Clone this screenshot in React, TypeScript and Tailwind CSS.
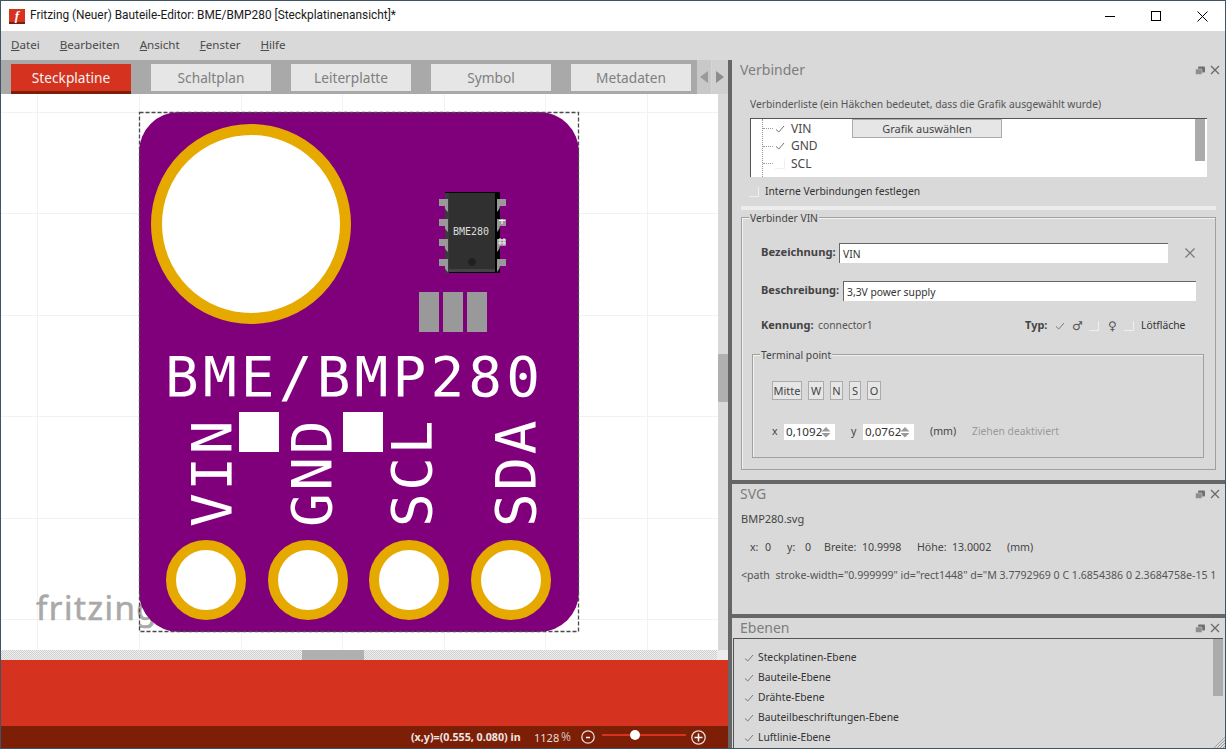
import React from "react";

const F = "font-['Noto_Sans',sans-serif]";
const BOX = "w-[10px] h-[10px] border-r border-b border-[#efefef] shrink-0";

function Check({ color = "#7a7a7a" }: { color?: string }) {
  return (
    <svg width="10" height="10" viewBox="0 0 10 10" className="shrink-0">
      <path d="M1 5.5 L3.8 8 L9 2" fill="none" stroke={color} strokeWidth="1" />
    </svg>
  );
}

function PanelIcons() {
  return (
    <div className="flex items-center gap-[5px]">
      <svg width="10" height="9" viewBox="0 0 10 9">
        <rect x="3" y="0.5" width="7" height="6" rx="1" fill="#6f6f6f" />
        <rect x="0.5" y="3" width="6.5" height="5.5" rx="1" fill="#8f8f8f" stroke="#d9d9d9" strokeWidth="0.5" />
      </svg>
      <svg width="10" height="10" viewBox="0 0 10 10">
        <path d="M1 1 L9 9 M9 1 L1 9" stroke="#6a6a6a" strokeWidth="1.3" />
      </svg>
    </div>
  );
}

function PanelTitle({ children, className = "" }: { children: React.ReactNode; className?: string }) {
  return (
    <div className={`flex items-center justify-between pl-[8px] pr-[5px] ${className}`}>
      <span className="text-[14px] leading-[20px] text-[#7d7d7d]">{children}</span>
      <PanelIcons />
    </div>
  );
}

function Tab({ label, active }: { label: string; active?: boolean }) {
  return active ? (
    <div className="w-[120px] h-[30px] bg-[#d5321f] border-b-[3px] border-[#7d1e07] text-[#f2f2f2] text-[13.7px] leading-[27px] text-center">
      {label}
    </div>
  ) : (
    <div className="w-[120px] h-[27px] bg-[#e6e6e6] text-[#7f7f7f] text-[13.7px] leading-[27px] text-center">{label}</div>
  );
}

function Spin({ value }: { value: string }) {
  return (
    <div className="w-[51px] h-[16px] bg-white flex items-center pl-[2px] text-[11.6px] text-[#333] leading-none">
      <span className="w-[35px]">{value}</span>
      <svg width="10" height="12" viewBox="0 0 10 12">
        <path d="M5 1 L9.5 5.5 H0.5 Z M0.5 7 H9.5 L5 11.5 Z" fill="#9a9a9a" />
      </svg>
    </div>
  );
}

function SmallBtn({ label, w }: { label: string; w: string }) {
  return (
    <div className={`${w} h-[19px] bg-[#e6e6e6] border border-[#ababab] text-[11px] leading-[17px] text-center text-[#444]`}>
      {label}
    </div>
  );
}

function Board() {
  const gridX = [37, 139, 241, 342, 444, 545, 647];
  const gridY = [11, 112, 213, 315, 416, 518, 619];
  const pads = [206, 308, 409, 511];
  const pinsY = [199, 219, 239, 259];
  const labels: [string, number][] = [
    ["VIN", 231],
    ["GND", 331],
    ["SCL", 431],
    ["SDA", 535],
  ];
  return (
    <svg width="717" height="556" viewBox="1 94 717 556" className="block">
      <rect x="1" y="94" width="717" height="556" fill="#ffffff" />
      {gridX.map((x) => (
        <line key={x} x1={x + 0.5} x2={x + 0.5} y1="94" y2="650" stroke="#f1f2f3" />
      ))}
      {gridY.map((y) => (
        <line key={y} y1={y + 0.5} y2={y + 0.5} x1="0" x2="718" stroke="#f1f2f3" />
      ))}
      <text
        x="36"
        y="620"
        fontFamily="'Noto Sans', sans-serif"
        fontSize="33"
        fill="#a9a9a9"
        stroke="#a9a9a9"
        strokeWidth="0.6"
        letterSpacing="1.5"
      >
        fritzing
      </text>
      <rect x="139" y="112" width="440" height="520" rx="40" fill="#80007c" />
      <rect x="139.5" y="112.5" width="439" height="519" fill="none" stroke="#4a4a4a" strokeWidth="1.3" strokeDasharray="4 2" />
      <circle cx="251" cy="224" r="94.5" fill="#ffffff" stroke="#e5a900" strokeWidth="11" />
      {pads.map((x) => (
        <circle key={x} cx={x} cy="580" r="35" fill="#ffffff" stroke="#e5a900" strokeWidth="10" />
      ))}
      <rect x="445" y="192" width="55" height="81" fill="#000000" />
      <rect x="445" y="193" width="4" height="80" fill="#3a3a3a" />
      <rect x="449" y="193" width="46" height="76" fill="#303030" />
      <rect x="449" y="269" width="46" height="3" fill="#444444" />
      <circle cx="472" cy="262" r="4" fill="#202020" />
      {pinsY.map((y) => (
        <g key={y} fill="#999999">
          <path d={`M439 ${y} H448 V${y + 13} Q444 ${y + 10} 445 ${y + 7} H439 Z`} />
          <path d={`M506 ${y} H497 V${y + 13} Q500 ${y + 10} 500 ${y + 7} H506 Z`} />
        </g>
      ))}
      <path d="M499 220.5 H505 M502 219 V224" stroke="#ffffff" strokeWidth="1" />
      <path d="M498 240 H506 M498 243 H506 M500 238 V245 M504 238 V245" stroke="#eeeeee" strokeWidth="1" />
      <text
        x="453"
        y="235"
        fontFamily="'DejaVu Sans Mono', monospace"
        fontSize="10"
        fill="#dddddd"
      >
        BME280
      </text>
      {[419, 443, 467].map((x) => (
        <rect key={x} x={x} y="292" width="20" height="40" fill="#999999" />
      ))}
      <text
        x="165"
        y="396"
        fontFamily="'DejaVu Sans Mono', monospace"
        fontSize="56"
        fill="#ffffff"
        letterSpacing="4.2"
      >
        BME/BMP280
      </text>
      <rect x="239" y="412" width="40" height="40" fill="#ffffff" />
      <rect x="343" y="412" width="40" height="40" fill="#ffffff" />
      {labels.map(([t, x]) => (
        <text
          key={t}
          transform={`translate(${x} 527) rotate(-90)`}
          fontFamily="'DejaVu Sans Mono', monospace"
          fontSize="56"
          fill="#ffffff"
          letterSpacing="2.6"
        >
          {t}
        </text>
      ))}
    </svg>
  );
}

export default function App() {
  return (
    <div className={`w-[1226px] h-[749px] overflow-hidden border border-[#3f5566] flex flex-col bg-[#d9d9d9] ${F}`}>
      {/* title bar */}
      <div className="h-[30px] bg-white flex items-center shrink-0">
        <div className="ml-[8px] w-[16px] h-[15px] bg-[#d5321f] border-b-2 border-[#7d1e07] text-white text-[13px] leading-[13px] font-bold text-center font-['Liberation_Serif',serif] italic">
          f
        </div>
        <span className="ml-[5px] text-[11.85px] text-[#1a1a1a] font-['Roboto',sans-serif]">Fritzing (Neuer) Bauteile-Editor: BME/BMP280 [Steckplatinenansicht]*</span>
        <div className="ml-auto flex items-center">
          <div className="w-[46px] h-[30px] flex items-center justify-center">
            <div className="w-[10px] h-px bg-black" />
          </div>
          <div className="w-[46px] h-[30px] flex items-center justify-center">
            <div className="w-[10px] h-[10px] border border-black" />
          </div>
          <div className="w-[46px] h-[30px] flex items-center justify-center">
            <svg width="11" height="11" viewBox="0 0 11 11">
              <path d="M0.5 0.5 L10.5 10.5 M10.5 0.5 L0.5 10.5" stroke="#000" strokeWidth="1" />
            </svg>
          </div>
        </div>
      </div>
      {/* menu */}
      <div className="h-[27px] pb-0 mb-[2px] shrink-0 bg-[#d9d9d9] flex items-center pl-[10px] gap-[20px] text-[11.6px] text-[#4a4a4a]">
        {["Datei", "Bearbeiten", "Ansicht", "Fenster", "Hilfe"].map((m) => (
          <span key={m}>
            <span className="underline">{m[0]}</span>
            {m.slice(1)}
          </span>
        ))}
      </div>
      <div className="flex-1 flex min-h-0">
        {/* left */}
        <div className="w-[727px] flex flex-col shrink-0">
          <div className="h-[34px] bg-[#a9a9a9] flex pt-[4px] pl-[10px] gap-[20px] relative shrink-0">
            <Tab label="Steckplatine" active />
            <Tab label="Schaltplan" />
            <Tab label="Leiterplatte" />
            <Tab label="Symbol" />
            <Tab label="Metadaten" />
            <div className="absolute right-0 top-0 h-full w-[31px] flex">
              <div className="w-[15px] bg-[#c8c8c8] flex items-center justify-center border-r border-[#d6d6d6]">
                <svg width="8" height="12" viewBox="0 0 8 12"><path d="M8 0 V12 L0 6 Z" fill="#9a9a9a" /></svg>
              </div>
              <div className="flex-1 bg-[#d0d0d0] flex items-center justify-center">
                <svg width="8" height="12" viewBox="0 0 8 12"><path d="M0 0 V12 L8 6 Z" fill="#8c8c8c" /></svg>
              </div>
            </div>
          </div>
          <div className="h-[556px] flex shrink-0">
            <div className="w-[717px] overflow-hidden"><Board /></div>
            <div className="w-[10px] bg-[#d9d9d9] pt-[260px]">
              <div className="h-[48px] bg-[#b0b0b0] rounded-[1px]" />
            </div>
          </div>
          <div className="h-[10px] shrink-0 flex">
            <div className="w-[716px] bg-[repeating-conic-gradient(#cfcfcf_0_25%,#f0f0f0_0_50%)] bg-[length:2px_2px] pl-[301px]">
              <div className="w-[62px] h-full bg-[#b0b0b0]" />
            </div>
            <div className="flex-1 bg-[#ececec]" />
          </div>
          <div className="h-[66px] bg-[#d5321f] shrink-0" />
          <div className="flex-1 bg-[#7d1e07] flex items-center text-white leading-none pl-[410px]">
            <span className="font-bold w-[123px] text-[10.7px] text-[#f0e6e2] whitespace-nowrap">(x,y)=(0.555, 0.080) in</span>
            <span className="w-[27px] text-[11px] text-[#e8dcd8]">1128</span>
            <span className="w-[20px] text-[12px] text-[#cdb6ae]">%</span>
            <svg width="14" height="14" viewBox="0 0 14 14">
              <circle cx="7" cy="7" r="6.2" fill="none" stroke="#e8dcd8" strokeWidth="1.3" />
              <path d="M5 7.5 H9" stroke="#fff" strokeWidth="1.5" />
            </svg>
            <div className="ml-[7px] w-[84px] h-[2px] bg-[#d5321f] relative -translate-y-[2px]">
              <div className="absolute left-[28px] top-[-4px] w-[10px] h-[10px] rounded-full bg-white" />
            </div>
            <svg width="15" height="15" viewBox="0 0 15 15" className="ml-[5px]">
              <circle cx="7.5" cy="7.5" r="6.7" fill="none" stroke="#e8dcd8" strokeWidth="1.3" />
              <path d="M3.5 7.5 H11.5 M7.5 3.5 V11.5" stroke="#fff" strokeWidth="1.5" />
            </svg>
          </div>
        </div>
        {/* divider */}
        <div className="w-[4px] bg-[#666666] shrink-0" />
        {/* right */}
        <div className="flex-1 flex flex-col min-w-0 text-[10.3px] text-[#444]">
          <div className="h-[420px] shrink-0">
            <PanelTitle className="h-[20px]">Verbinder</PanelTitle>
            <div className="ml-[18px] mt-[16px] leading-[16px] text-[#555]">Verbinderliste (ein Häkchen bedeutet, dass die Grafik ausgewählt wurde)</div>
            <div className="relative ml-[18px] mt-[6px] w-[457px] h-[59px] pt-px bg-white border-l border-t border-[#555] text-[12px] text-[#4a4a4a]">
              <div className="absolute left-[11px] top-0 bottom-0 border-l border-dotted border-[#999]" />
              {[["VIN", true], ["GND", true], ["SCL", false]].map(([t, c]) => (
                <div key={t as string} className="h-[17.5px] flex items-center pl-[24px] relative">
                  <div className="absolute left-[12px] w-[10px] border-t border-dotted border-[#999]" />
                  <div className="w-[10px] h-[10px] mr-[6px]">{c ? <Check color="#66788a" /> : <div className={BOX} />}</div>
                  <span>{t as string}</span>
                </div>
              ))}
              <div className="absolute left-[101px] top-0 w-[150px] h-[19px] bg-[#e6e6e6] border border-[#ababab] text-[11px] leading-[17px] text-center text-[#444]">Grafik auswählen</div>
              <div className="absolute right-[2px] top-0 w-[10px] h-[42px] bg-[#ababab]" />
            </div>
            <div className="ml-[17px] mt-[6px] h-[16px] pt-px flex items-center text-[#333]">
              <div className={`${BOX} mr-[6px]`} />
              Interne Verbindungen festlegen
            </div>
            <div className="ml-[9px] mt-[7px] w-[475px] h-[4px] bg-[#ededed]" />
            <div className="relative ml-[9px] mt-[7px] w-[475px] h-[253px] border border-[#a0a0a0] shadow-[inset_1px_1px_0_#f2f2f2] flex flex-col">
              <span className="absolute left-[7px] top-[-7px] bg-[#d9d9d9] px-px leading-[14px]">Verbinder VIN</span>
              <div className="flex items-center mt-[25px] pl-[19px] h-[20px]">
                <span className="font-bold text-[11.2px] w-[78px] text-[#444] -translate-y-px">Bezeichnung:</span>
                <div className="w-[329px] h-[20px] bg-white border-l border-t border-[#666] leading-[20px] pl-[3px] text-[#333]">VIN</div>
                <svg width="10" height="10" viewBox="0 0 10 10" className="ml-[17px]"><path d="M0.5 0.5 L9.5 9.5 M9.5 0.5 L0.5 9.5" stroke="#777" strokeWidth="1.2" /></svg>
              </div>
              <div className="flex items-center mt-[18px] pl-[19px] h-[20px]">
                <span className="font-bold text-[11px] w-[82px] text-[#444] -translate-y-px">Beschreibung:</span>
                <div className="w-[353px] h-[20px] bg-white border-l border-t border-[#666] leading-[20px] pl-[3px] text-[#333]">3,3V power supply</div>
              </div>
              <div className="flex items-center mt-[15px] pl-[19px] h-[20px]">
                <span className="font-bold text-[11px] w-[57px] text-[#444] -translate-y-px">Kennung:</span>
                <span className="w-[207px] text-[#555]">connector1</span>
                <span className="w-[30px] font-bold text-[11px] -translate-y-px">Typ:</span>
                <div className="w-[17px]"><Check /></div>
                <span className="w-[17px] text-[12px] leading-none text-[#555] font-['DejaVu_Sans',sans-serif]">♂</span>
                <div className={`${BOX} mr-[9px]`} />
                <span className="w-[16px] text-[12px] leading-none text-[#555] font-['DejaVu_Sans',sans-serif]">♀</span>
                <div className={`${BOX} mr-[7px]`} />
                <span className="text-[#333]">Lötfläche</span>
              </div>
              <div className="relative mx-[10px] mt-[18px] h-[104px] w-[452px] border border-[#a0a0a0] shadow-[inset_1px_1px_0_#f2f2f2] flex flex-col">
                <span className="absolute left-[7px] top-[-7px] bg-[#d9d9d9] px-px leading-[14px]">Terminal point</span>
                <div className="flex mt-[26px] ml-[19px] gap-[6px]">
                  <SmallBtn label="Mitte" w="w-[30px]" />
                  <SmallBtn label="W" w="w-[16px]" />
                  <SmallBtn label="N" w="w-[13px]" />
                  <SmallBtn label="S" w="w-[12px]" />
                  <SmallBtn label="O" w="w-[14px]" />
                </div>
                <div className="flex items-center mt-[24px] ml-[19px] h-[16px] text-[10.6px]">
                  <span className="w-[12px]">x</span>
                  <Spin value="0,1092" />
                  <span className="ml-[16px] w-[12px]">y</span>
                  <Spin value="0,0762" />
                  <span className="ml-[16px] w-[42px]">(mm)</span>
                  <span className="text-[#999] text-[10.3px]">Ziehen deaktiviert</span>
                </div>
              </div>
            </div>
          </div>
          <div className="h-[4px] bg-[#666666] shrink-0" />
          <div className="h-[130px] shrink-0">
            <PanelTitle className="h-[20px]">SVG</PanelTitle>
            <div className="ml-[9px] mt-[7px] leading-[16px] text-[11px]">BMP280.svg</div>
            <div className="ml-[18px] mt-[12px] flex leading-[16px] text-[10.6px]">
              <span className="w-[15px]">x:</span><span className="w-[22px]">0</span>
              <span className="w-[18px]">y:</span><span className="w-[19px]">0</span>
              <span className="w-[38px]">Breite:</span><span className="w-[55px]">10.9998</span>
              <span className="w-[35px]">Höhe:</span><span className="w-[55px]">13.0002</span>
              <span>(mm)</span>
            </div>
            <div className="ml-[9px] mt-[12px] leading-[16px] whitespace-pre text-[10.6px] text-[#555]">{'<path  stroke-width="0.999999" id="rect1448" d="M 3.7792969 0 C 1.6854386 0 2.3684758e-15 1'}</div>
          </div>
          <div className="h-[4px] bg-[#666666] shrink-0" />
          <div className="flex-1 min-h-0 flex flex-col">
            <PanelTitle className="h-[20px]">Ebenen</PanelTitle>
            <div className="relative flex-1 ml-px mr-[2px] border-l border-t border-[#555] pt-[9px] text-[#333]">
              {["Steckplatinen-Ebene", "Bauteile-Ebene", "Drähte-Ebene", "Bauteilbeschriftungen-Ebene", "Luftlinie-Ebene"].map((t) => (
                <div key={t} className="h-[20px] flex items-center pl-[10px] gap-[4px]">
                  <Check />
                  <span>{t}</span>
                </div>
              ))}
              <div className="absolute right-0 top-0 w-[10px] h-[57px] bg-[#ababab]" />
              <svg width="12" height="12" viewBox="0 0 12 12" className="absolute -right-[2px] bottom-0">
                <path d="M12 1 L1 12 M12 4 L4 12 M12 7 L7 12 M12 10 L10 12" stroke="#a0a0a0" strokeWidth="1" />
              </svg>
            </div>
          </div>
        </div>
      </div>
    </div>
  );
}
